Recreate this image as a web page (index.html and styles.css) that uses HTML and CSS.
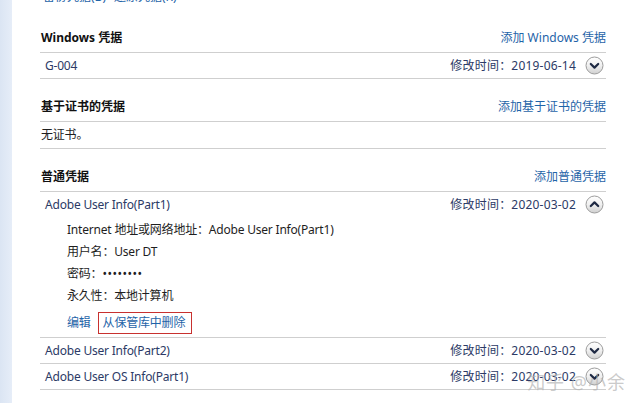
FILE: index.html
```html
<!DOCTYPE html>
<html lang="zh-CN">
<head>
    <meta charset="UTF-8">
    <title>凭据管理器</title>
    <link rel="stylesheet" href="styles.css">
</head>
<body>
    <div class="side"></div>
    <div class="main">
        <div class="toolbar">
            <a href="#">备份凭据(B)</a>
            <a href="#">还原凭据(R)</a>
        </div>

        <div class="section">
            <div class="section-head">
                <span class="title">Windows 凭据</span>
                <a href="#">添加 Windows 凭据</a>
            </div>
            <div class="row">
                <span class="name">G-004</span>
                <span class="date">修改时间：2019-06-14</span>
                <svg class="toggle" width="19" height="19" viewBox="0 0 19 19"><use href="#btn-down"/></svg>
            </div>
        </div>

        <div class="section">
            <div class="section-head">
                <span class="title">基于证书的凭据</span>
                <a href="#">添加基于证书的凭据</a>
            </div>
            <div class="row empty">
                <span>无证书。</span>
            </div>
        </div>

        <div class="section">
            <div class="section-head">
                <span class="title">普通凭据</span>
                <a href="#">添加普通凭据</a>
            </div>
            <div class="item open">
                <div class="row">
                    <span class="name">Adobe User Info(Part1)</span>
                    <span class="date">修改时间：2020-03-02</span>
                    <svg class="toggle" width="19" height="19" viewBox="0 0 19 19"><use href="#btn-up"/></svg>
                </div>
                <div class="details">
                    <div>Internet 地址或网络地址：Adobe User Info(Part1)</div>
                    <div>用户名：User DT</div>
                    <div>密码：<span class="dots">••••••••</span></div>
                    <div>永久性：本地计算机</div>
                    <div class="actions">
                        <a href="#">编辑</a>
                        <a href="#" class="marked">从保管库中删除</a>
                    </div>
                </div>
            </div>
            <div class="row">
                <span class="name">Adobe User Info(Part2)</span>
                <span class="date">修改时间：2020-03-02</span>
                <svg class="toggle" width="19" height="19" viewBox="0 0 19 19"><use href="#btn-down"/></svg>
            </div>
            <div class="row">
                <span class="name">Adobe User OS Info(Part1)</span>
                <span class="date">修改时间：2020-03-02</span>
                <svg class="toggle" width="19" height="19" viewBox="0 0 19 19"><use href="#btn-down"/></svg>
            </div>
        </div>
    </div>

    <div class="watermark">知乎 @小余</div>

    <!-- round expand / collapse buttons -->
    <svg width="0" height="0" class="defs">
        <defs>
            <linearGradient id="btn-fill" x1="0" y1="0" x2="0" y2="1">
                <stop offset="0" stop-color="#ffffff"/>
                <stop offset="0.5" stop-color="#f0f0f0"/>
                <stop offset="1" stop-color="#cfcfcf"/>
            </linearGradient>
            <g id="btn-down">
                <circle cx="9.5" cy="9.5" r="8.5" fill="url(#btn-fill)" stroke="#9c9c9c"/>
                <path d="M5.8 8 L9.5 11.6 L13.2 8" fill="none" stroke="#1f2a44" stroke-width="2.2" stroke-linecap="round" stroke-linejoin="round"/>
            </g>
            <g id="btn-up">
                <circle cx="9.5" cy="9.5" r="8.5" fill="url(#btn-fill)" stroke="#9c9c9c"/>
                <path d="M5.8 11 L9.5 7.4 L13.2 11" fill="none" stroke="#1f2a44" stroke-width="2.2" stroke-linecap="round" stroke-linejoin="round"/>
            </g>
        </defs>
    </svg>
</body>
</html>
```

FILE: styles.css
```css
body {
    margin: 0;
    padding: 0;
    display: flex;
    min-height: 100vh;
    overflow: hidden;
    background-color: #ffffff;
    font-family: 'Noto Sans', 'Noto Sans CJK SC', sans-serif;
    font-size: 12px;
    line-height: 16px;
    color: #1e1e1e;
    position: relative;
}
a {
    color: #1f64a8;
    text-decoration: none;
}
.side {
    width: 12px;
    flex: none;
    background: linear-gradient(to right, #dbe5f3, #e6edf8);
}
.main {
    width: 566px;
    margin-left: 28px;
}
.toolbar {
    margin-top: -11px;
    padding-left: 3px;
    display: flex;
    gap: 8px;
}
.section {
    margin-top: 25px;
}
.section + .section {
    margin-top: 20px;
}
.section-head {
    display: flex;
    justify-content: space-between;
    align-items: center;
    padding-left: 1px;
    padding-bottom: 6px;
    border-bottom: 1px solid #cfcfcf;
}
.section-head .title {
    font-weight: bold;
    color: #111111;
}
.row {
    display: flex;
    align-items: center;
    height: 25px;
    padding-left: 5px;
    padding-right: 2px;
    border-bottom: 1px solid #cfcfcf;
    color: #2c3a66;
    letter-spacing: -0.2px;
}
.row.empty {
    height: 26px;
    padding-left: 1px;
    color: #1e1e1e;
}
.row .name {
    flex: 1;
}
.row .date {
    margin-right: 9px;
    letter-spacing: 0.2px;
}
.toggle {
    display: block;
}
.item.open .row {
    border-bottom: none;
}
.item.open {
    border-bottom: 1px solid #cfcfcf;
}
.details {
    padding: 2px 0 3px 27px;
    line-height: 22px;
    letter-spacing: -0.2px;
}
.dots {
    font-size: 12px;
    letter-spacing: 0.5px;
}
.actions {
    margin-top: 5px;
    display: flex;
    align-items: center;
    gap: 7px;
}
.actions .marked {
    border: 1px solid #c8312f;
    padding: 0 6px 0 4px;
    line-height: 20px;
}
.watermark {
    position: absolute;
    right: 14px;
    bottom: 13px;
    font-size: 18px;
    color: rgba(180, 180, 180, 0.7);
    letter-spacing: 1px;
}
.defs {
    position: absolute;
}
```
